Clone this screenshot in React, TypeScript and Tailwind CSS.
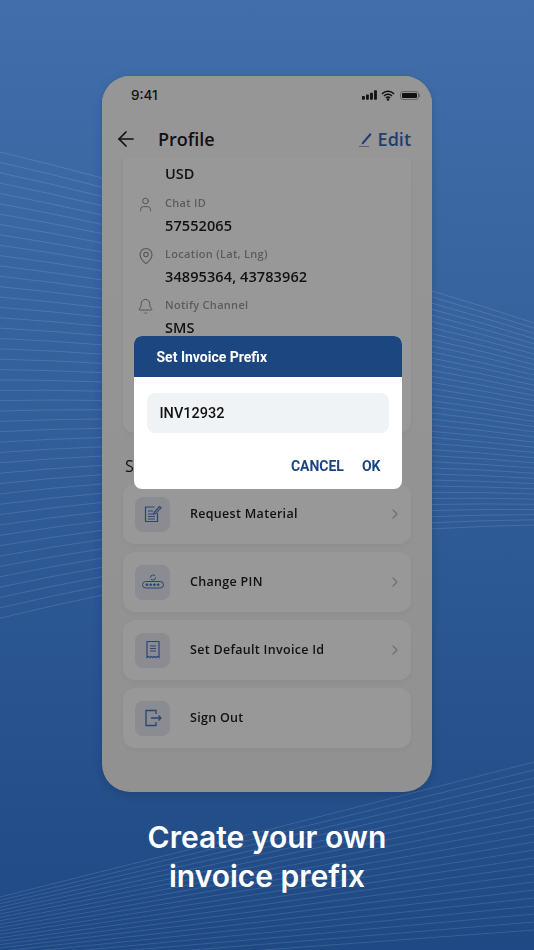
import { ArrowLeft, Bell, ChevronRight, MapPin, User } from 'lucide-react'
import type { ReactNode } from 'react'

const sans = 'font-["Open_Sans","Noto_Sans",sans-serif]'

const INFO = [
  { icon: <User size={17} strokeWidth={1.4} />, label: 'Chat ID', value: '57552065' },
  { icon: <MapPin size={18} strokeWidth={1.4} />, label: 'Location (Lat, Lng)', value: '34895364, 43783962' },
  { icon: <Bell size={17} strokeWidth={1.4} />, label: 'Notify Channel', value: 'SMS' },
]

function RequestIcon() {
  return (
    <svg width="20" height="20" viewBox="0 0 20 20" fill="none" stroke="currentColor" strokeWidth="1.2">
      <path d="M14.5 9v8.5h-12V3h9" />
      <path d="M5 7h5M5 10h5M5 12.5h7M5 15h7" />
      <path d="M11 8.5l5.5-6 1.5 1.3-5.6 6-1.7.4z" />
    </svg>
  )
}

function PinIcon() {
  return (
    <svg width="24" height="20" viewBox="0 0 24 20" fill="none" stroke="currentColor" strokeWidth="1">
      <rect x="1.5" y="9.5" width="21" height="6.5" rx="3.25" />
      <path d="M9.5 5.5a2.6 2.6 0 0 1 4.6-1.6M14.5 5.5a2.6 2.6 0 0 1-4.6 1.6" />
      <circle cx="6" cy="12.7" r=".9" fill="currentColor" />
      <circle cx="9.7" cy="12.7" r=".9" fill="currentColor" />
      <circle cx="13.4" cy="12.7" r=".9" fill="currentColor" />
      <circle cx="17.1" cy="12.7" r=".9" fill="currentColor" />
    </svg>
  )
}

function ReceiptIcon() {
  return (
    <svg width="20" height="20" viewBox="0 0 20 20" fill="none" stroke="currentColor" strokeWidth="1.2">
      <path d="M4 1.5h12v16l-1.5-1-1.5 1-1.5-1-1.5 1-1.5-1-1.5 1-1.5-1-1.5 1z" />
      <path d="M7 6h6M7 8.5h6M7 11h6" />
    </svg>
  )
}

function SignOutIcon() {
  return (
    <svg width="20" height="20" viewBox="0 0 20 20" fill="none" stroke="currentColor" strokeWidth="1.3">
      <path d="M13 6V2.5H3v15h10V14" />
      <path d="M8 10h10M15.5 7.5l2.5 2.5-2.5 2.5" />
    </svg>
  )
}

function Row({ icon, label, arrow = true }: { icon: ReactNode; label: string; arrow?: boolean }) {
  return (
    <div className="h-[60px] flex items-center pl-3 pr-[8px] rounded-xl bg-[#989898] shadow-[0_2px_5px_rgba(0,0,0,0.04)]">
      <div className="w-[35px] h-[35px] rounded-lg bg-[#8a8c91] flex items-center justify-center text-[#2a4673]">{icon}</div>
      <span className="ml-5 flex-1 text-[12.5px] font-semibold tracking-[0.3px] text-[#111]">{label}</span>
      {arrow && <ChevronRight size={16} strokeWidth={1.8} className="text-[#6f6f6f]" />}
    </div>
  )
}

function Waves() {
  const left = Array.from({ length: 46 }, (_, i) => {
    const y0 = 152 + i * 10.36
    const y1 = 178 + i * 9.27
    return `M0 ${y0} Q 51 ${(y0 + y1) / 2 - 1} 102 ${y1}`
  })
  const right = Array.from({ length: 40 }, (_, i) => {
    const y0 = 291 + i * 6.1
    const y1 = 323 + i * 5.18
    return `M432 ${y0} Q 483 ${(y0 + y1) / 2 - 1} 534 ${y1}`
  })
  const bottom = Array.from({ length: 22 }, (_, i) => {
    const y0 = 897 + i * 3.4
    const y1 = 762 + i * 8
    return `M0 ${y0} Q 267 ${(y0 + y1) / 2 + 1} 534 ${y1}`
  })
  return (
    <svg className="absolute inset-0" width="534" height="950" fill="none" stroke="#ffffff" strokeOpacity="0.12" strokeWidth="1">
      {[...left, ...right, ...bottom].map((d) => (
        <path key={d} d={d} />
      ))}
    </svg>
  )
}

export default function App() {
  return (
    <div className={`relative w-[534px] h-[950px] overflow-hidden bg-gradient-to-b from-[#426fab] to-[#1e4984] ${sans}`}>
      <Waves />

      <div className="relative flex flex-col items-center pt-[76px]">
        {/* Phone */}
        <div className="relative w-[330px] h-[716px] rounded-[28px] overflow-hidden bg-gradient-to-b from-[#969696] to-[#919191] shadow-[0_2px_10px_rgba(0,0,0,0.15)] blur-[0.3px]">
          <div className="relative z-10 bg-[#969696]">
            <div className="h-[38px] pl-[29px] pr-[12px] flex items-center justify-between">
              <span className="text-[13.5px] font-medium text-[#111] font-['Inter']">9:41</span>
              <div className="flex items-center gap-[4px]">
                <svg width="15" height="10" viewBox="0 0 16 10" fill="#111">
                  <rect x="0" y="6" width="3" height="4" rx=".7" />
                  <rect x="4.3" y="4.5" width="3" height="5.5" rx=".7" />
                  <rect x="8.6" y="2.5" width="3" height="7.5" rx=".7" />
                  <rect x="12.9" y="0" width="3" height="10" rx=".7" />
                </svg>
                <svg width="14" height="11" viewBox="0 0 15 11" fill="none" stroke="#111" strokeWidth="1.6">
                  <path d="M1 3.8a9 9 0 0 1 13 0M3.2 6a6 6 0 0 1 8.6 0M5.3 8.1a3 3 0 0 1 4.4 0" />
                  <circle cx="7.5" cy="9.8" r=".6" fill="#111" />
                </svg>
                <div className="ml-[1px] flex items-center">
                  <div className="w-[19px] h-[9px] rounded-[3px] border border-[#666] p-[1px]">
                    <div className="w-full h-full rounded-[1px] bg-[#111]" />
                  </div>
                  <div className="w-[1px] h-[3px] bg-[#666]" />
                </div>
              </div>
            </div>
            <div className="h-[44px] pt-[6px] flex items-center pl-[12px] pr-[21px]">
              <ArrowLeft size={24} strokeWidth={1.7} className="text-[#111]" />
              <span className="ml-[20px] flex-1 text-[18px] font-semibold text-[#111]">Profile</span>
              <svg width="14" height="16" viewBox="0 0 14 16" fill="none" className="text-[#1f3f70]">
                <path d="M3 11.5l8-9.5 1.6 1.4-8 9.4-2.1.7z" fill="currentColor" />
                <path d="M0 15.5h10" stroke="currentColor" strokeOpacity="0.6" strokeWidth="1" />
              </svg>
              <span className="ml-[5px] text-[18px] font-semibold text-[#1f3f70]">Edit</span>
            </div>
          </div>

          {/* Details card */}
          <div className="mx-[21px] h-[275px] rounded-b-xl bg-[#989898] shadow-[0_2px_5px_rgba(0,0,0,0.04)] pl-[14px] pt-[6px]">
            <div className="pl-[28px] text-[14.5px] font-semibold leading-[20px] text-[#111]">USD</div>
            <div className="mt-[11px] flex flex-col gap-[10px]">
              {INFO.map(({ icon, label, value }) => (
                <div key={label} className="flex">
                  <div className="w-[28px] pt-[1px] text-[#555]">{icon}</div>
                  <div>
                    <div className="text-[11px] leading-[15px] font-semibold tracking-[0.3px] text-[#5c5c5c]">{label}</div>
                    <div className="mt-[6px] text-[14.5px] leading-[20px] font-semibold tracking-[0.1px] text-[#111]">{value}</div>
                  </div>
                </div>
              ))}
            </div>
          </div>

          {/* Settings */}
          <div className="mt-[24px] mx-[23px] text-[16px] leading-[18px] font-medium text-[#111]">Settings</div>
          <div className="mt-[9px] mx-[21px] flex flex-col gap-[8px]">
            <Row icon={<RequestIcon />} label="Request Material" />
            <Row icon={<PinIcon />} label="Change PIN" />
            <Row icon={<ReceiptIcon />} label="Set Default Invoice Id" />
            <Row icon={<SignOutIcon />} label="Sign Out" arrow={false} />
          </div>

          {/* Dialog */}
          <div className="absolute z-20 left-[31.5px] top-[260px] w-[268px] h-[153px] rounded-lg overflow-hidden bg-white font-['Roboto']">
            <div className="h-[41px] pt-[1px] bg-[#1c4680] flex items-center pl-[23px] text-[14px] font-bold text-white">Set Invoice Prefix</div>
            <div className="mx-[13px] mt-[16px] h-[40px] pt-[1px] rounded-lg bg-[#f0f3f6] flex items-center pl-[13px] text-[14.5px] font-medium text-[#111]">INV12932</div>
            <div className="mt-[23px] flex justify-end gap-[18px] pr-[21px] text-[14px] font-bold text-[#1c4680]">
              <span>CANCEL</span>
              <span>OK</span>
            </div>
          </div>
        </div>

        <div className="mt-[26px] text-center text-[30px] leading-[39px] font-semibold text-white font-['Inter']">
          Create your own
          <br />
          invoice prefix
        </div>
      </div>
    </div>
  )
}
